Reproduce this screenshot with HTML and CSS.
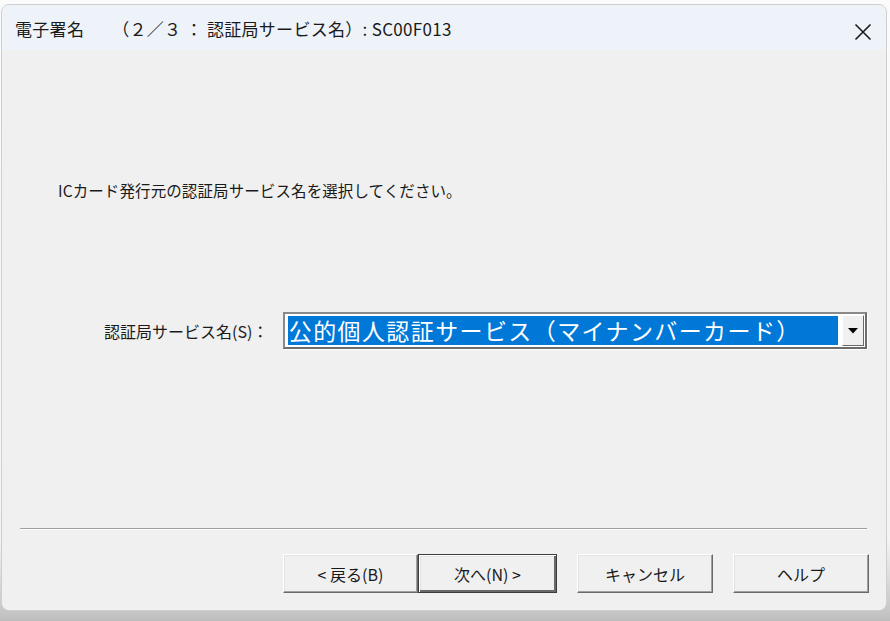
FILE: index.html
```html
<!DOCTYPE html>
<html lang="ja">
<head>
<meta charset="utf-8">
<link rel="stylesheet" href="styles.css">
</head>
<body>
<div class="window">
  <div class="titlebar">
    <span class="title"><span class="title-main">電子署名</span><span class="title-sub">（２／３ ： 認証局サービス名）: SC00F013</span></span>
    <span class="close">
      <svg width="18" height="18" viewBox="0 0 18 18"><path d="M1.5 1.5 L16.5 16.5 M16.5 1.5 L1.5 16.5" stroke="#1b1b1b" stroke-width="1.6" fill="none"/></svg>
    </span>
  </div>
  <div class="content">
    <p class="instruction">ICカード発行元の認証局サービス名を選択してください。</p>
    <div class="field">
      <label class="label">認証局サービス名(S)：</label>
      <div class="combo">
        <div class="combo-value">公的個人認証サービス（マイナンバーカード）</div>
        <div class="combo-btn">
          <svg width="10" height="6" viewBox="0 0 10 6"><path d="M0 0 H10 L5 5.5 Z" fill="#000"/></svg>
        </div>
      </div>
    </div>
    <div class="separator"></div>
    <div class="buttons">
      <button class="btn b1">&lt; 戻る(B)</button>
      <button class="btn btn-default b2">次へ(N) &gt;</button>
      <button class="btn b3">キャンセル</button>
      <button class="btn b4">ヘルプ</button>
    </div>
  </div>
</div>
</body>
</html>
```

FILE: styles.css
```css
html, body {
  margin: 0;
  padding: 0;
  height: 621px;
  overflow: hidden;
}
body {
  background: linear-gradient(to bottom, #fbfbfb 0px, #f4f4f4 540px, #c6c6c6 612px, #bdbdbd 621px);
  font-family: "Noto Sans CJK JP", "Noto Sans", sans-serif;
  color: #000;
  padding: 4px 0 0 1px;
  box-sizing: border-box;
}
.window {
  width: 886px;
  height: 607px;
  border-radius: 8px;
  background: #f0f0f0;
  border: 1px solid #cfcfcf;
  box-sizing: border-box;
  overflow: hidden;
  display: flex;
  flex-direction: column;
}
.titlebar {
  height: 45px;
  background: #eef3f9;
  display: flex;
  align-items: center;
  justify-content: space-between;
  padding: 0 12px 0 13px;
  flex: none;
}
.title {
  font-size: 17px;
  letter-spacing: 0.3px;
  color: #1a1a1a;
  margin-top: 1px;
  white-space: pre;
}
.title-main {
  margin-right: 28px;
}
.close {
  display: flex;
  width: 18px;
  height: 18px;
  margin-top: 9px;
  margin-right: 2px;
}
.content {
  flex: 1;
  padding: 0 19px 0 18px;
  display: flex;
  flex-direction: column;
}
.instruction {
  margin: 130px 0 0 38px;
  font-size: 15.5px;
  line-height: 20px;
  letter-spacing: 0.1px;
  color: #1a1a1a;
}
.field {
  display: flex;
  align-items: center;
  margin-top: 112px;
}
.label {
  font-size: 16px;
  letter-spacing: 0;
  margin-left: 84px;
  width: 179px;
  color: #1a1a1a;
  white-space: nowrap;
}
.combo {
  width: 585px;
  height: 37px;
  box-sizing: border-box;
  background: #fff;
  border: 2px solid;
  border-color: #8a8a8a #6c6c6c #6c6c6c #8a8a8a;
  box-shadow: 1px 1px 0 #fff;
  padding: 2px 2px 2px 3px;
  display: flex;
  align-items: stretch;
}
.combo-value {
  flex: 1;
  background: #0078d7;
  color: #fff;
  font-size: 23px;
  line-height: 29px;
  height: 29px;
  letter-spacing: 1.4px;
  white-space: nowrap;
  padding-left: 1px;
  margin-right: 4px;
}
.combo-btn {
  width: 22px;
  box-sizing: border-box;
  background: #f0f0f0;
  border: 1px solid;
  border-color: #ffffff #696969 #696969 #ffffff;
  display: flex;
  align-items: center;
  justify-content: center;
  margin: -1px -1px -1px 0;
}
.separator {
  margin-top: 179px;
  height: 0;
  border-top: 1px solid #a0a0a0;
  border-bottom: 1px solid #ffffff;
}
.buttons {
  display: flex;
  margin-top: 24px;
  margin-right: -2px;
  justify-content: flex-end;
}
.btn {
  font-family: "Noto Sans CJK JP", "Noto Sans", sans-serif;
  font-size: 16px;
  letter-spacing: 0;
  color: #1a1a1a;
  height: 39px;
  background: #f0f0f0;
  border: 1px solid;
  border-color: #ffffff #696969 #696969 #ffffff;
  box-shadow: inset -1px -1px 0 #a0a0a0, inset 1px 1px 0 #e3e3e3;
  padding: 0;
  margin: 0;
  box-sizing: border-box;
  white-space: pre;
}
.b1 { width: 135px; }
.b2 { width: 139px; margin-right: 20px; }
.b3 { width: 136px; margin-right: 20px; }
.b4 { width: 136px; }
.btn-default {
  border: 1px solid #3c3c3c;
  box-shadow: inset 1px 1px 0 #ffffff, inset -2px -2px 0 #696969, inset 2px 2px 0 #e3e3e3;
}
```
